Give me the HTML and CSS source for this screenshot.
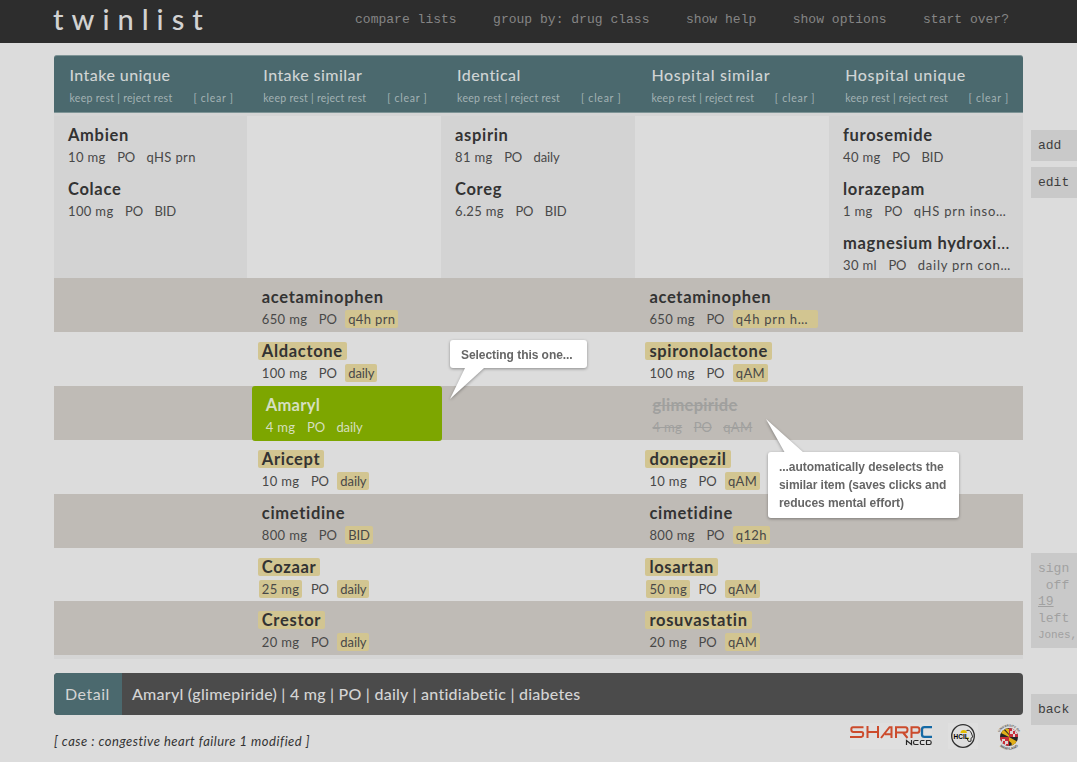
FILE: index.html
```html
<!DOCTYPE html>
<html lang="en">
<head>
<meta charset="utf-8">
<title>twinlist</title>
<link rel="stylesheet" href="styles.css">
</head>
<body>
<header class="topbar">
  <h1 class="logo">twinlist</h1>
  <nav class="menu"><a>compare lists</a><a>group by: drug class</a><a>show help</a><a>show options</a><a>start over?</a></nav>
</header>
<div class="workspace">
<main class="main">
  <section class="board">
    <div class="cols heads">
      <div class="head"><h2>Intake unique</h2><p><span>keep rest | reject rest</span><span class="clear">[ clear ]</span></p></div>
      <div class="head"><h2>Intake similar</h2><p><span>keep rest | reject rest</span><span class="clear">[ clear ]</span></p></div>
      <div class="head"><h2>Identical</h2><p><span>keep rest | reject rest</span><span class="clear">[ clear ]</span></p></div>
      <div class="head hospital"><h2>Hospital similar</h2><p><span>keep rest | reject rest</span><span class="clear">[ clear ]</span></p></div>
      <div class="head hospital"><h2>Hospital unique</h2><p><span>keep rest | reject rest</span><span class="clear">[ clear ]</span></p></div>
    </div>
    <div class="cols lists">
      <div class="list shade">
        <div class="item"><b>Ambien</b><p><span>10 mg</span><span>PO</span><span>qHS prn</span></p></div>
        <div class="item"><b>Colace</b><p><span>100 mg</span><span>PO</span><span class="tight">BID</span></p></div>
      </div>
      <div class="list"></div>
      <div class="list shade">
        <div class="item"><b>aspirin</b><p><span>81 mg</span><span>PO</span><span class="tight">daily</span></p></div>
        <div class="item"><b>Coreg</b><p><span>6.25 mg</span><span>PO</span><span class="tight">BID</span></p></div>
      </div>
      <div class="list"></div>
      <div class="list shade">
        <div class="item"><b>furosemide</b><p><span>40 mg</span><span>PO</span><span class="tight">BID</span></p></div>
        <div class="item"><b>lorazepam</b><p><span>1 mg</span><span>PO</span><span class="wide">qHS prn inso…</span></p></div>
        <div class="item"><b>magnesium hydroxi<i>…</i></b><p><span>30 ml</span><span>PO</span><span class="wide">daily prn con…</span></p></div>
      </div>
    </div>
    <div class="cols row dark">
      <div class="item left"><b>acetaminophen</b><p><span>650 mg</span><span>PO</span><span class="hl">q4h prn</span></p></div>
      <div class="item right"><b>acetaminophen</b><p><span>650 mg</span><span>PO</span><span class="hl cut wide">q4h prn h…</span></p></div>
    </div>
    <div class="cols row">
      <div class="item left"><b class="hl">Aldactone</b><p><span>100 mg</span><span>PO</span><span class="hl tight">daily</span></p></div>
      <div class="item right"><b class="hl">spironolactone</b><p><span>100 mg</span><span>PO</span><span class="hl">qAM</span></p></div>
    </div>
    <div class="cols row dark">
      <div class="item left chosen"><b>Amaryl</b><p><span>4 mg</span><span>PO</span><span class="tight">daily</span></p></div>
      <div class="item right rejected"><b>glimepiride</b><p><span>4 mg</span><span>PO</span><span>qAM</span></p></div>
    </div>
    <div class="cols row">
      <div class="item left"><b class="hl">Aricept</b><p><span>10 mg</span><span>PO</span><span class="hl tight">daily</span></p></div>
      <div class="item right"><b class="hl">donepezil</b><p><span>10 mg</span><span>PO</span><span class="hl">qAM</span></p></div>
    </div>
    <div class="cols row dark">
      <div class="item left"><b>cimetidine</b><p><span>800 mg</span><span>PO</span><span class="hl tight">BID</span></p></div>
      <div class="item right"><b>cimetidine</b><p><span>800 mg</span><span>PO</span><span class="hl">q12h</span></p></div>
    </div>
    <div class="cols row">
      <div class="item left"><b class="hl">Cozaar</b><p><span class="hl">25 mg</span><span>PO</span><span class="hl tight">daily</span></p></div>
      <div class="item right"><b class="hl">losartan</b><p><span class="hl">50 mg</span><span>PO</span><span class="hl">qAM</span></p></div>
    </div>
    <div class="cols row dark">
      <div class="item left"><b class="hl">Crestor</b><p><span>20 mg</span><span>PO</span><span class="hl tight">daily</span></p></div>
      <div class="item right"><b class="hl">rosuvastatin</b><p><span>20 mg</span><span>PO</span><span class="hl">qAM</span></p></div>
    </div>
  </section>
  <section class="detail"><h3>Detail</h3><p>Amaryl (glimepiride) | 4 mg | PO | daily | antidiabetic | diabetes</p></section>
  <footer class="foot">
    <p class="case">[ case : congestive heart failure 1 modified ]</p>
    <div class="logos">
      <svg class="sharp" viewBox="0 0 82 26" width="82" height="26">
        <rect width="82" height="26" fill="#dfdfdf"/>
        <g fill="none" stroke="#cc4b2c" stroke-width="2">
          <path d="M13.500 4.200H3Q1.300 4.200 1.300 6.400T3 8.900H11.500Q13.200 8.900 13.200 11.200T11.500 13.900H0"/>
          <path d="M17.500 3v12M28 3v12M17.500 9H28"/>
          <path d="M31 15L39.500 4.200H41.500V15M35 11.300h6.500"/>
          <path d="M46 15V4.200h9.500Q57.500 4.200 57.500 6.800T55.500 9.500H46M53 9.500l4.500 5.500"/>
          <path d="M61.500 15V4.200h6q2 0 2 2.700T67.500 9.800h-6"/>
        </g>
        <path d="M82 4.200H74.500Q72 4.200 72 6.500v5q0 2.400 2.500 2.400H82" fill="none" stroke="#1469a5" stroke-width="2.300"/>
        <path d="M56.500 22V17.500l5 4v-4.500M68.500 17.500h-3.500q-1.500 0-1.500 2t1.500 2h3.500M74.500 17.500h-3q-1.200 0-1.200 2t1.200 2h3M76.500 17.500h3.200q1.500 0 1.500 2t-1.500 2h-3.200z" fill="none" stroke="#282828" stroke-width="1.200"/>
      </svg>
      <svg class="hcil" viewBox="0 0 30 26" width="30" height="26">
        <rect width="30" height="26" fill="#dfdfdf"/>
        <circle cx="15" cy="13" r="11.300" fill="#dedede" stroke="#303030" stroke-width="1.300"/>
        <path d="M12.500 10a3.200 3 0 0 1 6.400 0z" fill="#e3bd00"/><path d="M17.500 14.500h3.500l-1 3z" fill="#e3bd00"/>
        <path d="M18.500 7.500Q22 6.500 23.300 10L24.800 14l-1.800 1.200v3l-2.500.3L19 15.500" fill="none" stroke="#333" stroke-width="1"/>
        <text x="5.500" y="15.500">HCIL</text>
      </svg>
      <svg class="umd" viewBox="0 0 28 28" width="28" height="28">
        <defs><clipPath id="disc"><circle cx="14" cy="14" r="9"/></clipPath>
        <path id="arcTop" d="M3.500 14a10.500 10.500 0 0 1 21 0"/><path id="arcLow" d="M1 14a13 13 0 0 0 26 0"/></defs>
        <g clip-path="url(#disc)"><rect width="28" height="28" fill="#252525"/>
          <path d="M14 3h10v11H14zM4 14h10v11H4z" fill="#c92d39"/>
          <path d="M4 9l4-3 6 6v2zM14 14l9 5-3 4-6-5zM8 4l6 7V6zM16 17l5 7h-4z" fill="#e0ae19"/>
          <path d="M17 5v3h-2v3h3v3h2v-3h3V8h-3V5zM7 16v2H5v3h3v3h3v-3h2v-3h-3v-2z" fill="#ddd5d4"/>
          <path d="M18 8h2v3h-2zM8 18h2v3H8z" fill="#c92d39"/>
        </g>
        <text class="seal"><textPath href="#arcTop" startOffset="5">UNIVERSITY OF</textPath></text>
        <text class="seal low"><textPath href="#arcLow" startOffset="10">MARYLAND</textPath></text>
      </svg>
    </div>
  </footer>
</main>
<aside class="side">
  <button class="tab">add</button><button class="tab edit">edit</button>
  <div class="signoff">sign<br>&nbsp;off<br><u>19</u><br>left<br><small>Jones,</small></div>
  <button class="tab back">back</button>
</aside>
</div>
<div class="callout first"><p>Selecting this one...</p><svg viewBox="0 0 36 32" width="36" height="32"><path d="M15 0L0 31 34 0z"/></svg></div>
<div class="callout second"><p>...automatically deselects the<br>similar item (saves clicks and<br>reduces mental effort)</p><svg viewBox="0 0 38 34" width="38" height="34"><path d="M0 0L19 34H38z"/></svg></div>
</body>
</html>
```
FILE: styles.css
```css
* { box-sizing: border-box; }
body { margin: 0; width: 1077px; height: 762px; overflow: hidden; position: relative; background: #dcdcdc; color: #333; font-family: Lato, "Noto Sans", sans-serif; }
h1, h2, h3, p { margin: 0; font-weight: 400; }
.topbar { height: 43px; background: #2d2d2d; display: flex; padding-left: 53px; }
.logo { width: 302px; font-size: 29px; line-height: 38px; letter-spacing: 8px; color: #d2d2d2; font-weight: 500; }
.menu { display: flex; gap: 36.4px; padding-top: 12px; font: 13px/16px "Liberation Mono", monospace; letter-spacing: .02px; color: #858585; white-space: pre; }
.workspace { display: flex; height: 719px; }
.main { width: 969px; margin: 12px 8px 0 54px; }
.cols { display: grid; grid-template-columns: repeat(5, 1fr); }
.board { height: 604px; background: #d5d5d5; border-radius: 3px 3px 0 0; }
.heads { height: 58px; background: #4b696e; border-radius: 3px 3px 0 0; border-top: 1px solid #7e9496; border-bottom: 1px solid #7e9496; }
.head { padding: 8px 15px 0 15.5px; white-space: nowrap; }
.head h2 { font-size: 16px; line-height: 22px; font-weight: 500; letter-spacing: .42px; color: #d0d4d4; }
.hospital { padding-left: 16px; }
.head.hospital h2 { letter-spacing: .66px; }
.head p { display: flex; justify-content: space-between; margin-top: 4px; font-size: 10.500px; line-height: 16px; color: #a3b2b4; letter-spacing: .29px; }
.head .clear { letter-spacing: .75px; margin-right: -1px; }
.lists { height: 162px; margin-top: 3px; grid-template-columns: 193px repeat(4, 194px); }
.list { background: #dcdcdc; }
.shade { background: #d3d3d3; }
.row { height: 54px; background: #dcdcdc; }
.row + .row { height: 53.900px; }
.dark { background: #bfbbb6; }
.item { height: 54px; padding: 10px 0 0 10px; white-space: nowrap; }
.item b { display: block; width: max-content; padding: 0 4px; font-size: 16.500px; line-height: 18px; height: 18px; font-weight: 700; letter-spacing: .68px; }
.item b i { font-style: normal; font-weight: 400; letter-spacing: 0; }
.item p { display: flex; gap: 5.500px; margin-top: 4px; padding-left: 1px; font-size: 13px; line-height: 18px; letter-spacing: .35px; color: #484848; }
.item span { padding: 0 3px; }
.item span:nth-child(2) { letter-spacing: -.15px; }
.item .tight { letter-spacing: -.1px; }
.item .wide { letter-spacing: .75px; }
.item .hl { background: #d2c591; border-radius: 2px; }
.item .cut { width: 85px; }
.left { grid-column: 2; }
.right { grid-column: 4; }
.chosen { margin-left: 4px; width: 190px; height: 55px; background: #7da600; border-radius: 3px; }
.chosen b, .chosen p { color: #d5dfbf; }
.chosen b { letter-spacing: .3px; }
.rejected { padding-left: 13px; }
.rejected b, .rejected p { color: #a0a09e; }
.rejected b, .rejected span { text-decoration: line-through; }
.rejected b { letter-spacing: .3px; }
.detail { margin-top: 14px; height: 42px; background: #4b4b4b; border-radius: 4px; display: flex; overflow: hidden; color: #d4d4d4; font-size: 16px; line-height: 41px; white-space: nowrap; }
.detail h3 { width: 68px; padding-left: 11px; background: #4b696e; font-size: 16px; letter-spacing: .5px; }
.detail p { padding-left: 10px; letter-spacing: .24px; font-weight: 500; }
.foot { display: flex; justify-content: space-between; height: 40px; }
.case { padding-top: 16px; font-size: 13px; line-height: 20px; font-style: italic; letter-spacing: .5px; }
.logos { display: flex; align-items: flex-start; padding-top: 8px; }
.hcil { margin-left: 16px; }
.umd { margin-left: 17px; }
.hcil text { font: bold 6.500px "Liberation Sans", sans-serif; }
.seal { font: bold 3px "Liberation Sans", sans-serif; fill: #555; }
.low { font-size: 3.600px; }
.side { width: 46px; font-family: "Liberation Mono", monospace; padding-top: 87px; }
.tab { display: block; width: 46px; height: 31px; padding: 0 0 0 7px; border: 0; background: #c9c9c9; color: #3e3e3e; font: 13px/31px "Liberation Mono", monospace; text-align: left; }
.edit { margin-top: 6px; }
.signoff { margin-top: 355px; height: 95px; padding: 8px 0 0 7px; background: #c9c9c9; color: #a1a1a1; font-size: 13px; line-height: 16.500px; white-space: nowrap; }
.signoff small { font-size: 11px; letter-spacing: -.1px; }
.back { margin-top: 46px; }
.callout { position: absolute; background: #fff; border-radius: 3px; filter: drop-shadow(0 1px 1.500px rgba(0, 0, 0, .35)); color: #666; font: 12px/18px "Liberation Sans", sans-serif; white-space: nowrap; }
.callout p { font-weight: 700; letter-spacing: -.05px; }
.callout svg { position: absolute; fill: #fff; }
.first { left: 450px; top: 340px; width: 137px; height: 28px; padding: 6px 11px; }
.first svg { left: 0; top: 28px; }
.second { left: 768px; top: 452px; width: 191px; height: 66px; padding: 6px 11px; }
.second svg { left: -2px; top: -33px; }
```
